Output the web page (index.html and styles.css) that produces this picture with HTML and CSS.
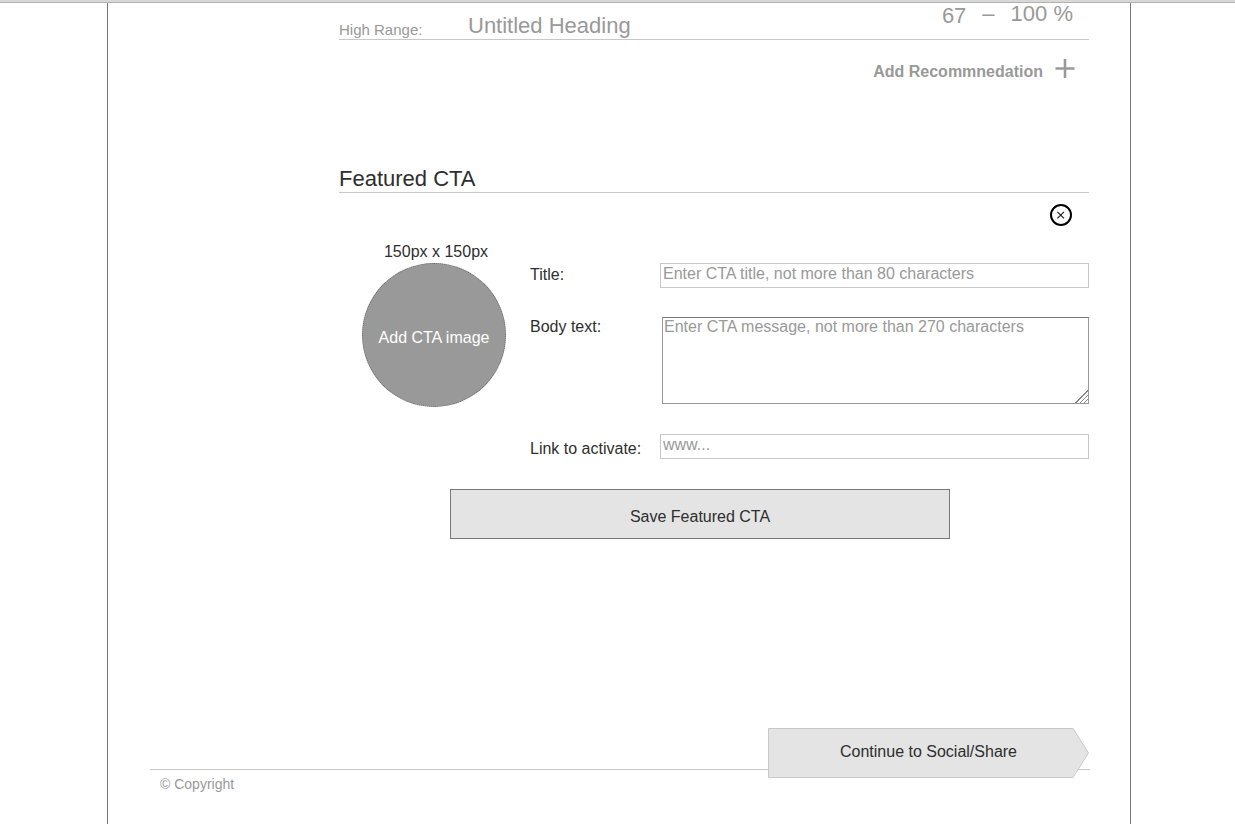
FILE: index.html
```html
<!DOCTYPE html>
<html lang="en">
<head>
  <meta charset="UTF-8" />
  <meta name="viewport" content="width=device-width, initial-scale=1.0" />
  <title>Featured CTA</title>
  <link rel="stylesheet" href="styles.css">
</head>
<body>
  <div class="page">
    <main class="content">
      <!-- Recommendation range -->
      <div class="range-row">
        <label class="range-label" for="highRange">High Range:</label>
        <input class="range-heading" type="text" id="highRange" placeholder="Untitled Heading" />
        <div class="range-values">
          <span class="range-from">67</span>
          <span>–</span>
          <span>100 %</span>
        </div>
      </div>

      <button type="button" class="add-btn">
        Add Recommnedation
        <svg width="20" height="20" viewBox="0 0 20 20" aria-hidden="true">
          <path d="M10 0v19M0.500 9.500h19" stroke="#999" stroke-width="2.6" />
        </svg>
      </button>

      <!-- Featured CTA -->
      <h2>Featured CTA</h2>
      <button type="button" class="close-btn" aria-label="Remove CTA">
        <svg width="22" height="22" viewBox="0 0 22 22" aria-hidden="true">
          <circle cx="11" cy="11" r="10" fill="none" stroke="#000" stroke-width="2" />
          <path d="M7.400 7.800l6.600 6.600M14 7.800l-6.600 6.600" stroke="#222" stroke-width="1.2" />
        </svg>
      </button>

      <form class="cta-form">
        <div class="cta-image">
          <p>150px x 150px</p>
          <button type="button" class="image-btn">Add CTA image</button>
        </div>
        <div class="fields">
          <div class="field">
            <label for="ctaTitle">Title:</label>
            <input type="text" id="ctaTitle" maxlength="80" placeholder="Enter CTA title, not more than 80 characters" />
          </div>
          <div class="field field-body">
            <label for="ctaBody">Body text:</label>
            <textarea id="ctaBody" maxlength="270" placeholder="Enter CTA message, not more than 270 characters"></textarea>
          </div>
          <div class="field field-link">
            <label for="ctaLink">Link to activate:</label>
            <input type="text" id="ctaLink" placeholder="www..." />
          </div>
        </div>
        <button type="submit" class="save-btn">Save Featured CTA</button>
      </form>
    </main>

    <footer>
      <button type="button" class="next-btn">
        <svg width="321" height="50" viewBox="0 0 321 50" aria-hidden="true">
          <path d="M0.500 0.500H305L320.500 25L305 49.500H0.500z" fill="#e4e4e4" stroke="#c8c8c8" />
        </svg>
        <span>Continue to Social/Share</span>
      </button>
      <p class="copyright">© Copyright</p>
    </footer>
  </div>
</body>
</html>
```
FILE: styles.css
```css
/* ---------- Base ---------- */
*, *::before, *::after { box-sizing: border-box; margin: 0; padding: 0; }
body {
  font-family: "Liberation Sans", Arial, sans-serif;
  font-size: 16px;
  line-height: 20px;
  color: #2e2e2e;
  background: #fff;
  border-top: 2px solid #d8d8d8;
  padding-left: 3px;
}
body::before {
  content: "";
  display: block;
  height: 1px;
  margin-left: -3px;
  background: #b2b2b2;
}
button, input, textarea { font: inherit; color: inherit; }
button { border: none; background: none; cursor: pointer; }
::placeholder { color: #999; opacity: 1; }

.page {
  display: flex;
  flex-direction: column;
  max-width: 1024px;
  min-height: calc(100vh - 3px);
  margin: 0 auto;
  border: solid #777;
  border-width: 0 1px;
}
.content {
  display: flex;
  flex-direction: column;
  flex: 1;
  padding: 0 41px 0 231px;
}

/* ---------- Range row ---------- */
.range-row {
  display: flex;
  align-items: flex-end;
  height: 37px;
  color: #999;
  border-bottom: 1px solid #c8c8c8;
}
.range-label { width: 129px; font-size: 15px; line-height: 18px; }
.range-heading {
  flex: 1;
  min-width: 0;
  height: 26px;
  border: none;
  font-size: 22px;
}
.range-values {
  display: flex;
  gap: 16px;
  align-self: flex-start;
  padding-right: 16px;
  font-size: 22px;
  line-height: 22px;
}
.range-from { padding-top: 2px; }
.add-btn {
  display: flex;
  align-items: center;
  align-self: flex-end;
  gap: 12px;
  margin: 18px 14px 0 0;
  line-height: 28px;
  font-weight: bold;
  color: #999;
}
.add-btn svg { margin-bottom: 6px; }

/* ---------- Featured CTA ---------- */
h2 {
  margin-top: 80px;
  font-size: 22px;
  line-height: 26px;
  font-weight: normal;
  border-bottom: 1px solid #c8c8c8;
}
.close-btn { align-self: flex-end; height: 22px; margin: 11px 17px 0 0; }
.close-btn svg { display: block; }
.cta-form {
  display: grid;
  grid-template-columns: 191px 1fr;
  margin-top: 15px;
}
.cta-image { width: 144px; margin-left: 23px; text-align: center; white-space: nowrap; }
.cta-image p { padding-left: 4px; line-height: 22px; }
.image-btn {
  width: 144px;
  height: 144px;
  padding-top: 6px;
  border: 1px dotted #666;
  border-radius: 50%;
  background: #999;
  color: #fff;
}
.fields { display: flex; flex-direction: column; gap: 29px; padding-top: 22px; }
.field { display: flex; }
.field label { flex: none; width: 130px; padding-top: 2px; }
.field input {
  flex: 1;
  min-width: 0;
  height: 25px;
  padding: 0 2px 4px;
  border: 1px solid #c8c8c8;
}
.field textarea {
  flex: 1;
  min-width: 0;
  height: 87px;
  margin-left: 2px;
  padding: 0 1px;
  line-height: 18px;
  border: 1px solid #999;
  border-top-color: #777;
}
.field textarea::-webkit-resizer {
  background:
    linear-gradient(135deg, #fff 55%, transparent 55%),
    repeating-linear-gradient(135deg, #888 0 1px, #fff 1px 3px);
}
.field-body { padding-bottom: 1px; }
.field-body label { padding-top: 0; }
.field-link label { padding-top: 5px; }
.save-btn {
  grid-column: 1 / 3;
  width: 500px;
  height: 50px;
  margin: 30px 0 0 111px;
  padding-top: 6px;
  border: 1px solid #777;
  background: #e4e4e4;
}

/* ---------- Footer ---------- */
footer { padding: 0 40px 30px 42px; }
.next-btn {
  display: grid;
  width: 321px;
  height: 50px;
  margin: 0 1px -9px auto;
  position: relative;
}
.next-btn svg, .next-btn span { grid-area: 1 / 1; }
.next-btn span { align-self: center; padding-bottom: 2px; }
.copyright {
  padding: 4px 10px 0;
  border-top: 1px solid #c8c8c8;
  font-size: 14px;
  color: #999;
}
```
